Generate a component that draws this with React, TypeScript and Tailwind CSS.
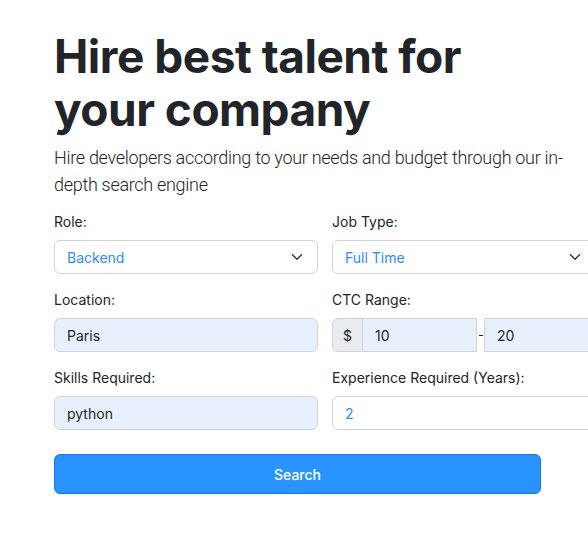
import React from "react";

function Chevron() {
  return (
    <svg width="12" height="12" viewBox="0 0 16 16" fill="none" stroke="#343a40" strokeWidth="2" strokeLinecap="round" strokeLinejoin="round">
      <path d="M2 5l6 6 6-6" />
    </svg>
  );
}

export default function App() {
  const label = "block h-5 leading-5 text-[14px] text-[#212529] mb-2";
  return (
    <div className="w-[588px] h-[550px] overflow-hidden bg-white" style={{ fontFamily: "Inter, 'Liberation Sans', sans-serif" }}>
      <div className="pl-[54px] pt-[30px]">
        <div className="w-[487px]">
          <h1 className="text-[46px] leading-[53px] font-bold text-[#212529] tracking-[-0.5px] w-[487px]">
            Hire best talent for your company
          </h1>
          <p className="mt-[8px] text-[18px] leading-[27px] font-light text-[#212529] w-[515px] tracking-[-0.3px]" style={{ fontFamily: "Roboto, sans-serif" }}>
            Hire developers according to your needs and budget through our in-depth search engine
          </p>
          <div className="mt-[14px] grid grid-cols-[264px_264px] gap-x-[14px] gap-y-[16px]">
            <div>
              <label className={label}>Role:</label>
              <div className="h-[34px] border border-[#ced4da] rounded-[6px] flex items-center justify-between pl-[12px] pr-[14px] text-[14px] text-[#2f8cff] bg-white">
                <span>Backend</span>
                <Chevron />
              </div>
            </div>
            <div>
              <label className={label}>Job Type:</label>
              <div className="h-[34px] border border-[#ced4da] rounded-[6px] flex items-center justify-between pl-[12px] pr-[14px] text-[14px] text-[#2f8cff] bg-white">
                <span>Full Time</span>
                <Chevron />
              </div>
            </div>
            <div>
              <label className={label}>Location:</label>
              <div className="h-[34px] border border-[#ced4da] rounded-[6px] flex items-center pl-[12px] text-[14px] text-[#212529] bg-[#e8f0fe]">
                Paris
              </div>
            </div>
            <div>
              <label className={label}>CTC Range:</label>
              <div className="flex items-center w-[300px]">
                <div className="h-[34px] w-[31px] border border-[#ced4da] rounded-l-[6px] bg-[#e9ecef] flex items-center justify-center text-[14px] text-[#212529]">$</div>
                <div className="h-[34px] w-[114px] border border-l-0 border-[#ced4da] bg-[#e8f0fe] flex items-center pl-[12px] text-[14px] text-[#212529]">10</div>
                <span className="w-[7px] flex justify-center text-[#212529] text-[14px]"><span className="block w-[4px] h-px bg-[#212529]" /></span>
                <div className="h-[34px] w-[140px] border border-[#ced4da] bg-[#e8f0fe] flex items-center pl-[12px] text-[14px] text-[#212529]">20</div>
              </div>
            </div>
            <div>
              <label className={label}>Skills Required:</label>
              <div className="h-[34px] border border-[#ced4da] rounded-[6px] flex items-center pl-[12px] text-[14px] text-[#212529] bg-[#e8f0fe]">
                python
              </div>
            </div>
            <div>
              <label className={label}>Experience Required (Years):</label>
              <div className="h-[34px] border border-[#ced4da] rounded-[6px] flex items-center pl-[12px] text-[14px] text-[#2f8cff] bg-white">
                2
              </div>
            </div>
          </div>
          <button className="mt-[24px] w-[487px] h-[40px] rounded-[6px] bg-[#2994ff] border border-[#1a73f0] text-white text-[14px] font-medium">
            Search
          </button>
        </div>
      </div>
    </div>
  );
}
